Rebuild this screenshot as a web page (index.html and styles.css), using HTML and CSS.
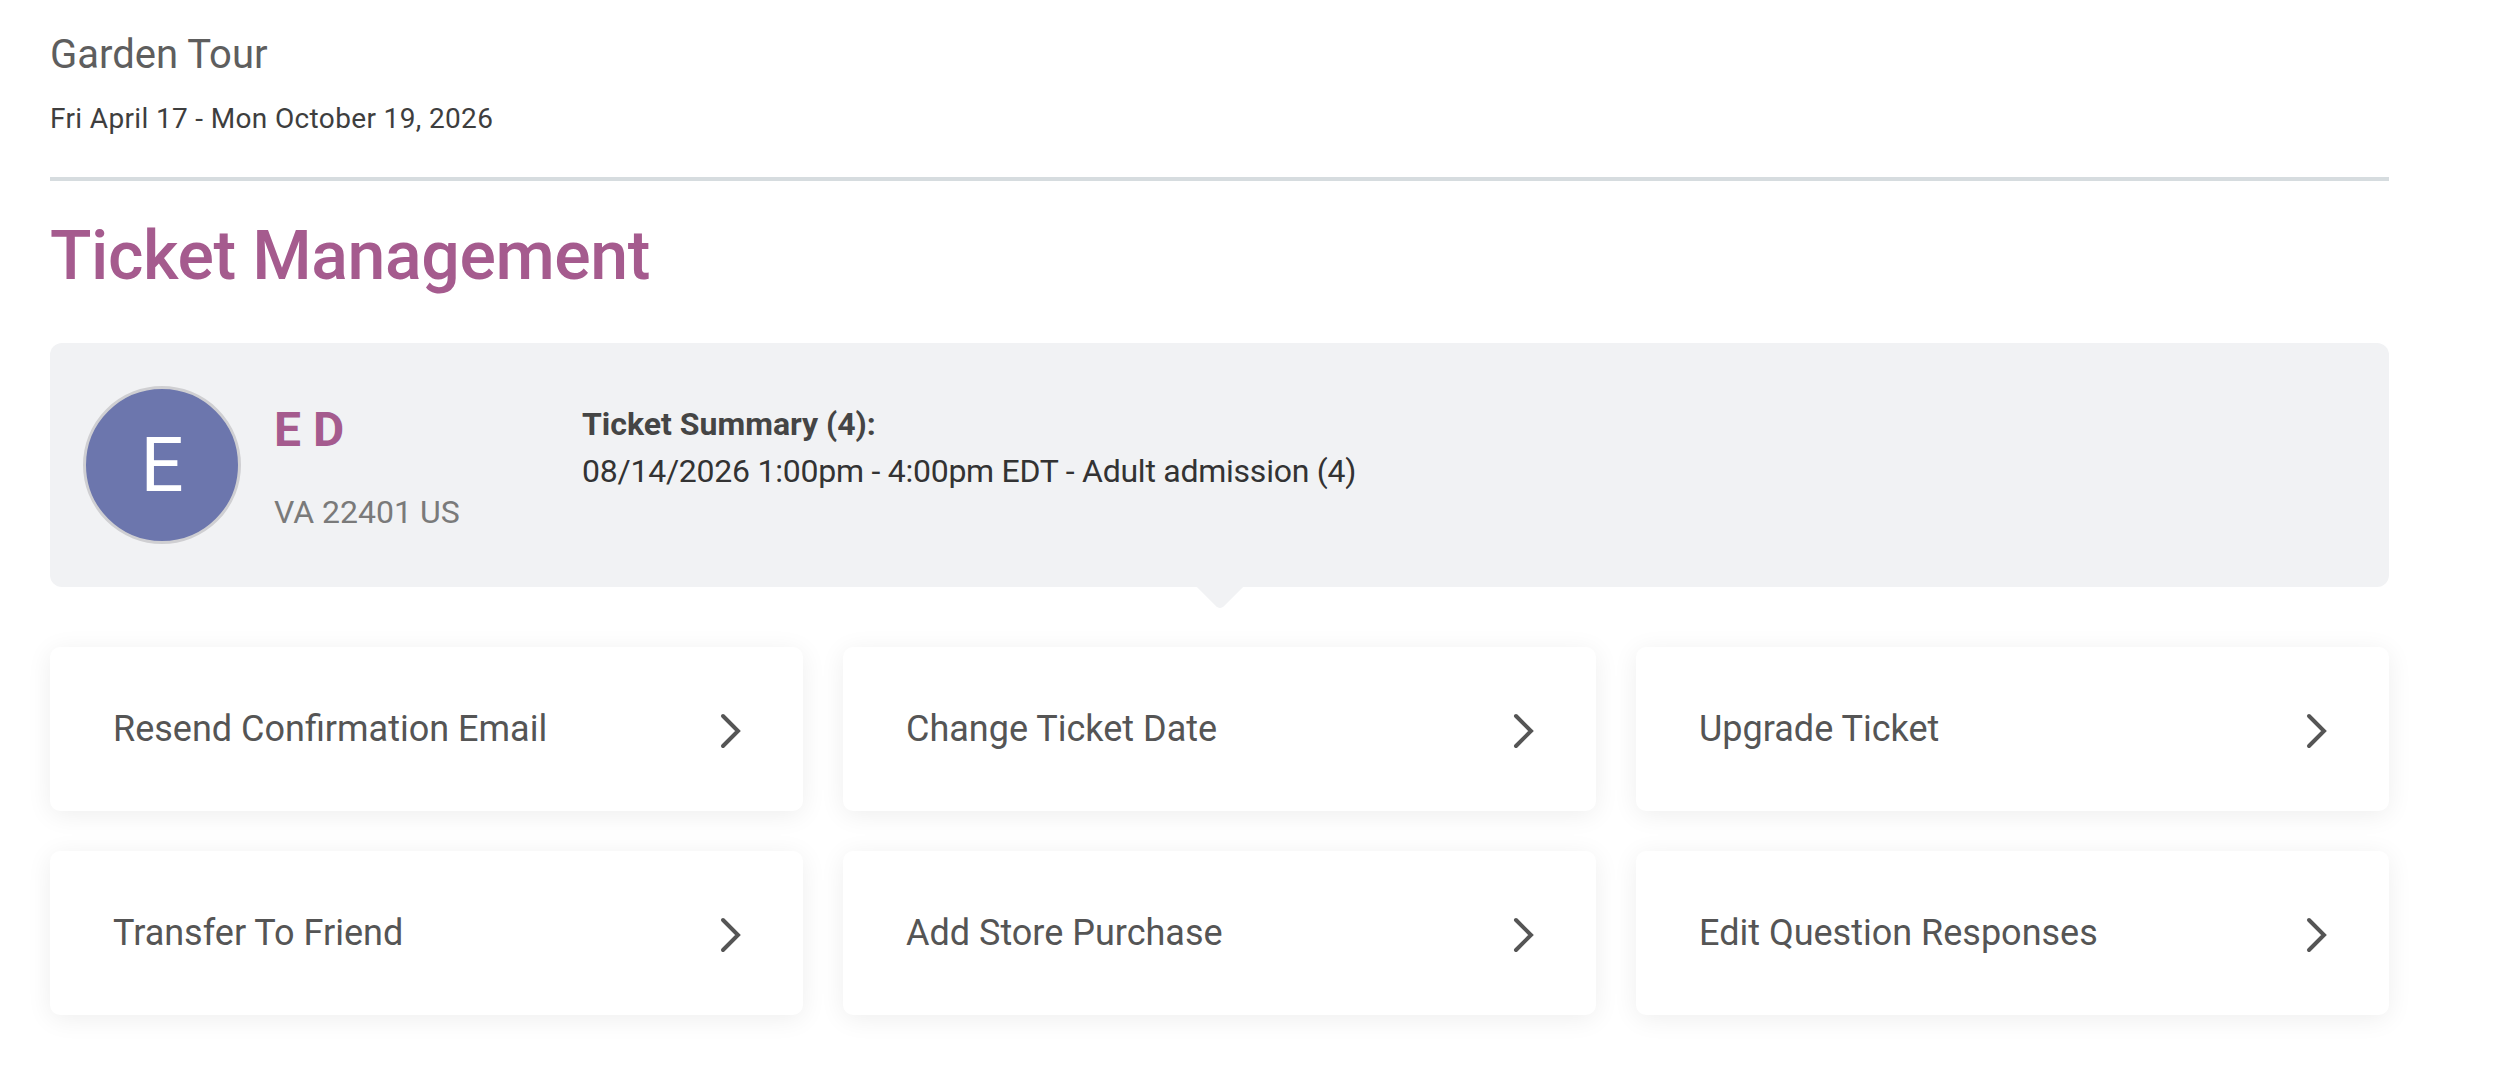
FILE: index.html
```html
<!DOCTYPE html>
<html lang="en">
<head>
<meta charset="utf-8">
<title>Ticket Management</title>
<link rel="stylesheet" href="styles.css">
</head>
<body>
<main class="page">
  <header class="event">
    <h2 class="event-name">Garden Tour</h2>
    <p class="event-dates">Fri April 17 - Mon October 19, 2026</p>
  </header>
  <hr class="divider">
  <h1 class="page-title">Ticket Management</h1>

  <section class="summary">
    <div class="avatar">E</div>
    <div class="holder">
      <div class="holder-name">E D</div>
      <div class="holder-address">VA 22401 US</div>
    </div>
    <div class="tickets">
      <div class="tickets-title">Ticket Summary (4):</div>
      <div class="tickets-line">08/14/2026 1:00pm - 4:00pm EDT - Adult admission (4)</div>
    </div>
  </section>

  <nav class="actions">
    <a class="action" href="#">
      <span>Resend Confirmation Email</span>
      <svg class="chev" viewBox="0 0 24 36" width="24" height="36"><polyline points="4,3 19,18 4,33"/></svg>
    </a>
    <a class="action" href="#">
      <span>Change Ticket Date</span>
      <svg class="chev" viewBox="0 0 24 36" width="24" height="36"><polyline points="4,3 19,18 4,33"/></svg>
    </a>
    <a class="action" href="#">
      <span>Upgrade Ticket</span>
      <svg class="chev" viewBox="0 0 24 36" width="24" height="36"><polyline points="4,3 19,18 4,33"/></svg>
    </a>
    <a class="action" href="#">
      <span>Transfer To Friend</span>
      <svg class="chev" viewBox="0 0 24 36" width="24" height="36"><polyline points="4,3 19,18 4,33"/></svg>
    </a>
    <a class="action" href="#">
      <span>Add Store Purchase</span>
      <svg class="chev" viewBox="0 0 24 36" width="24" height="36"><polyline points="4,3 19,18 4,33"/></svg>
    </a>
    <a class="action" href="#">
      <span>Edit Question Responses</span>
      <svg class="chev" viewBox="0 0 24 36" width="24" height="36"><polyline points="4,3 19,18 4,33"/></svg>
    </a>
  </nav>
</main>
</body>
</html>
```

FILE: styles.css
```css
* {
  box-sizing: border-box;
}

body {
  margin: 0;
  background: #ffffff;
  font-family: Roboto, "Liberation Sans", Arial, sans-serif;
  color: #444444;
}

.page {
  width: 2339px;
  margin-left: 50px;
  padding-top: 31px;
  padding-bottom: 60px;
}

/* Event header */
.event-name {
  margin: 0;
  font-size: 40px;
  line-height: 48px;
  font-weight: 400;
  color: #5e5e5e;
}

.event-dates {
  margin: 20px 0 0;
  font-size: 28px;
  line-height: 40px;
  letter-spacing: 0.35px;
  color: #3e3e3e;
}

.divider {
  margin: 38px 0 0;
  border: 0;
  height: 4px;
  background: #d6dcdf;
}

.page-title {
  margin: 33px 0 0;
  font-size: 68px;
  line-height: 84px;
  font-weight: 500;
  letter-spacing: -0.4px;
  color: #a55b8e;
}

/* Ticket holder summary panel */
.summary {
  position: relative;
  margin-top: 45px;
  height: 244px;
  padding: 43px 33px;
  background: #f1f2f4;
  border-radius: 12px;
  display: flex;
  align-items: flex-start;
}

.summary::after {
  content: "";
  position: absolute;
  left: 50%;
  bottom: -14px;
  width: 44px;
  height: 44px;
  margin-left: -22px;
  background: #f1f2f4;
  transform: rotate(45deg);
  border-bottom-right-radius: 5px;
  z-index: 0;
}

.avatar {
  flex: none;
  width: 158px;
  height: 158px;
  border-radius: 50%;
  border: 3px solid #cfcfd2;
  background: #6c76ad;
  color: #ffffff;
  font-size: 76px;
  line-height: 1;
  display: flex;
  align-items: center;
  justify-content: center;
}

.holder {
  flex: none;
  width: 308px;
  margin-left: 33px;
  margin-top: 16px;
}

.holder-name {
  font-size: 48px;
  line-height: 56px;
  font-weight: 700;
  color: #a55b8e;
}

.holder-address {
  margin-top: 34px;
  font-size: 32px;
  line-height: 40px;
  color: #7a7a7a;
}

.tickets {
  margin-top: 15px;
  font-size: 32px;
  line-height: 47px;
}

.tickets-title {
  font-weight: 700;
  color: #454545;
}

.tickets-line {
  letter-spacing: -0.25px;
  color: #333333;
}

/* Action tiles */
.actions {
  position: relative;
  z-index: 1;
  margin-top: 60px;
  display: grid;
  grid-template-columns: repeat(3, 1fr);
  gap: 40px;
}

.action {
  height: 164px;
  padding: 0 60px 0 63px;
  background: #ffffff;
  border-radius: 10px;
  box-shadow: 0 4px 26px rgba(0, 0, 0, 0.07);
  display: flex;
  align-items: center;
  justify-content: space-between;
  text-decoration: none;
  font-size: 36px;
  color: #555555;
}

.chev {
  flex: none;
  margin-top: 4px;
}

.chev polyline {
  fill: none;
  stroke: #555555;
  stroke-width: 4;
  stroke-linecap: round;
  stroke-linejoin: miter;
}
```
